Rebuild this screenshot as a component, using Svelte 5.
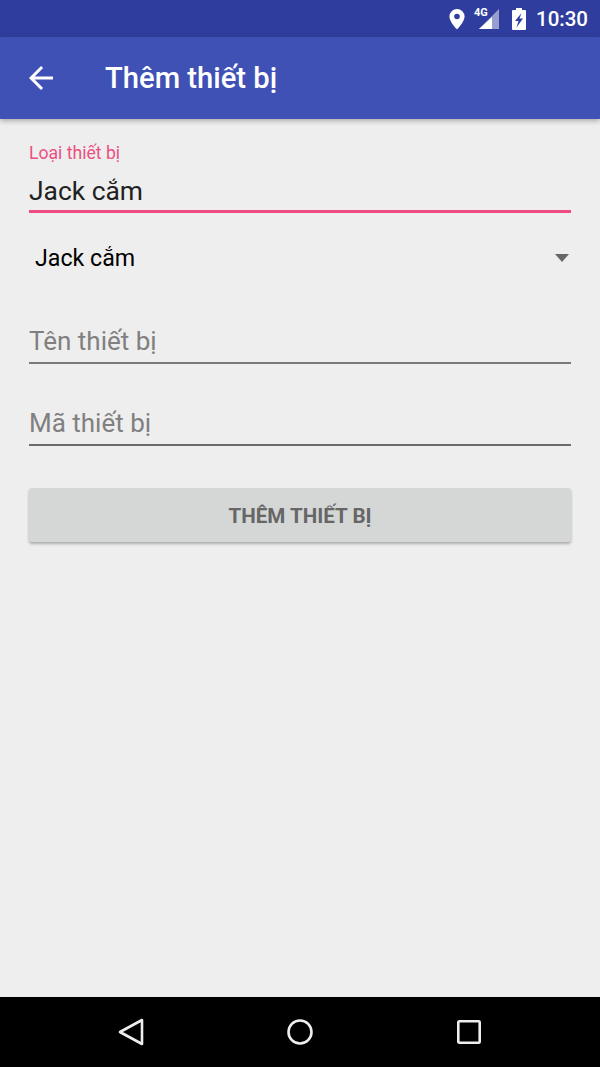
<script lang="ts">
    const fields = ["Tên thiết bị", "Mã thiết bị"];
</script>

<div class="screen">
    <div class="status">
        <svg class="pin" width="18" height="22" viewBox="0 0 18 22" aria-hidden="true">
            <path fill="#fff" fill-rule="evenodd" d="M9 1a7.6 7.6 0 0 0-7.6 7.6C1.400 14 9 21.500 9 21.500S16.600 14 16.600 8.600A7.600 7.600 0 0 0 9 1zm0 10.300a2.800 2.800 0 1 1 0-5.600 2.800 2.800 0 0 1 0 5.600z"/>
        </svg>
        <div class="signal">
            <svg width="26" height="22" viewBox="0 0 26 22" aria-hidden="true">
                <path fill="#fff" fill-opacity="0.5" d="M25 1v20H5z"/>
                <path fill="#fff" d="M18 9v12H5z"/>
            </svg>
            <span class="net">4G</span>
        </div>
        <svg class="battery" width="14" height="22" viewBox="0 0 14 22" aria-hidden="true">
            <path fill="#fff" fill-rule="evenodd" d="M4 0h6v2h3a1 1 0 0 1 1 1v18a1 1 0 0 1-1 1H1a1 1 0 0 1-1-1V3a1 1 0 0 1 1-1h3zM9.500 5 3 13h3.500L4.500 19.500 11 10.500H7.500z"/>
        </svg>
        <span class="clock">10:30</span>
    </div>

    <header class="appbar">
        <svg class="back" width="24" height="24" viewBox="0 0 24 24" aria-hidden="true">
            <path fill="#fff" d="M24 10.500H5.700l8.400-8.400L12 0 0 12l12 12 2.100-2.100-8.400-8.400H24z"/>
        </svg>
        <h1>Thêm thiết bị</h1>
    </header>

    <main class="form">
        <div class="focused">
            <span class="label">Loại thiết bị</span>
            <span class="value">Jack cắm</span>
        </div>

        <div class="spinner">
            <span>Jack cắm</span>
            <svg width="14" height="8" viewBox="0 0 14 8" aria-hidden="true"><path fill="#666" d="M0 0h14L7 8z"/></svg>
        </div>

        {#each fields as f (f)}
            <div class="field">{f}</div>
        {/each}

        <button class="submit">THÊM THIẾT BỊ</button>
    </main>

    <nav class="navbar">
        <svg width="28" height="28" viewBox="0 0 28 28" aria-hidden="true">
            <path fill="none" stroke="#eee" stroke-width="2.600" stroke-linejoin="round" d="M25 2v24L3 14z"/>
        </svg>
        <svg width="28" height="28" viewBox="0 0 28 28" aria-hidden="true">
            <circle cx="14" cy="14" r="11.500" fill="none" stroke="#eee" stroke-width="2.600"/>
        </svg>
        <svg width="28" height="28" viewBox="0 0 28 28" aria-hidden="true">
            <rect x="3.300" y="3.300" width="21.400" height="21.400" rx="1" fill="none" stroke="#eee" stroke-width="2.600"/>
        </svg>
    </nav>
</div>

<style>
    :global(body) {
        margin: 0;
        font-family: Roboto, "Noto Sans", sans-serif;
    }

    .screen {
        width: 600px;
        height: 1067px;
        display: flex;
        flex-direction: column;
        background: #eeeeee;
        overflow: hidden;
    }

    .status {
        height: 37px;
        flex: none;
        background: #2f3e9e;
        display: flex;
        align-items: center;
        justify-content: flex-end;
        padding-right: 12px;
        color: #fff;
    }

    .pin {
        margin-right: 8px;
    }

    .signal {
        position: relative;
        width: 26px;
        height: 22px;
        margin-right: 12px;
    }

    .signal svg {
        display: block;
    }

    .net {
        position: absolute;
        left: 0;
        top: -1px;
        font-size: 11px;
        font-weight: 700;
        line-height: 12px;
    }

    .battery {
        margin-right: 10px;
    }

    .clock {
        font-size: 20.500px;
        font-weight: 500;
    }

    .appbar {
        height: 82px;
        flex: none;
        background: #3f51b5;
        display: flex;
        align-items: center;
        padding-left: 29px;
        box-shadow: 0 2px 5px rgba(0, 0, 0, 0.28);
        position: relative;
    }

    .back {
        margin-right: 52px;
    }

    h1 {
        margin: 0;
        color: #fff;
        font-size: 29.200px;
        font-weight: 500;
    }

    .form {
        flex: 1;
        display: flex;
        flex-direction: column;
        padding: 23px 29px 0;
    }

    .focused {
        display: flex;
        flex-direction: column;
        height: 71px;
        border-bottom: 3px solid #ee4b80;
        box-sizing: border-box;
    }

    .label {
        color: #ec4f82;
        font-size: 17.600px;
        line-height: 22px;
    }

    .value {
        color: #212121;
        font-size: 26.400px;
        line-height: 34px;
        margin-top: 10px;
    }

    .spinner {
        height: 60px;
        margin-top: 15px;
        display: flex;
        align-items: center;
        justify-content: space-between;
        padding: 0 2px 0 6px;
        color: #000;
        font-size: 23.200px;
    }

    .field {
        height: 46px;
        box-sizing: border-box;
        margin-top: 30px;
        padding-top: 5px;
        border-bottom: 2px solid #7a7a7a;
        color: #808080;
        font-size: 26px;
        line-height: 36px;
    }

    .field + .field {
        margin-top: 36px;
        border-bottom-color: #6a6a6a;
    }

    .submit {
        margin-top: 42px;
        height: 54px;
        padding: 2px 0 0;
        border: none;
        border-radius: 3px;
        background: #d5d7d7;
        color: #666666;
        font: 700 20.600px Roboto, sans-serif;
        box-shadow: 0 2px 3px rgba(0, 0, 0, 0.28);
    }

    .navbar {
        height: 70px;
        flex: none;
        background: #000;
        display: flex;
        align-items: center;
        justify-content: space-between;
        padding: 0 117px;
    }
</style>
